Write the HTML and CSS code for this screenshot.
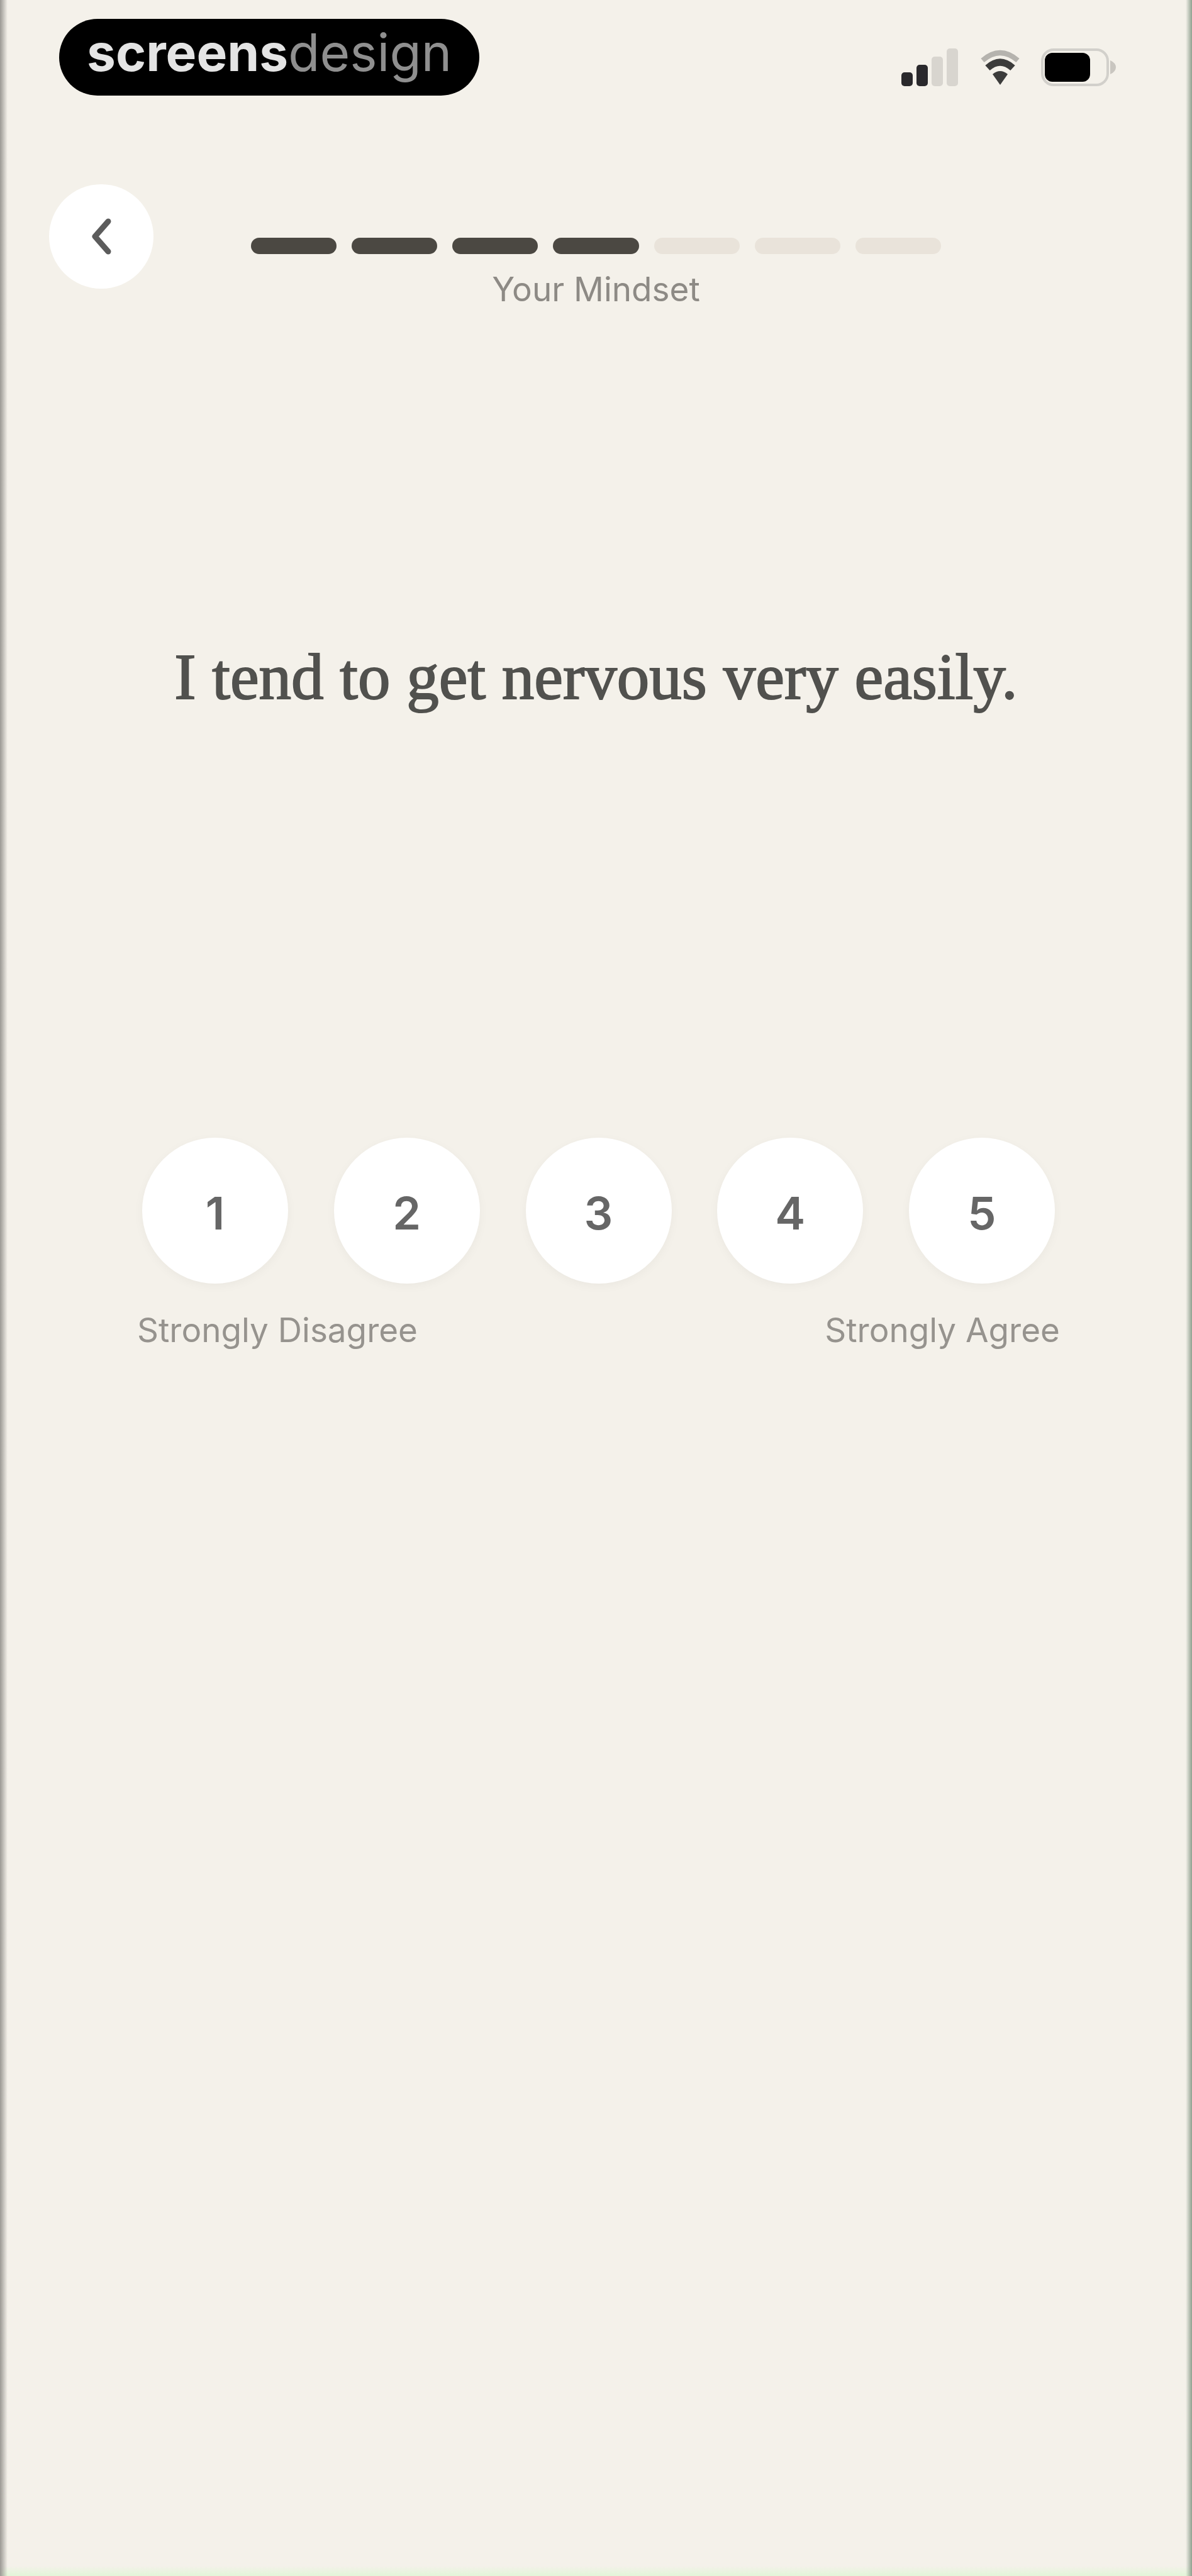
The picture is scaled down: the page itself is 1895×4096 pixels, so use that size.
FILE: index.html
```html
<!DOCTYPE html>
<html lang="en">
	<head>
		<meta charset="utf-8" />
		<title>Your Mindset</title>
		<link rel="stylesheet" href="styles.css">
	</head>
	<body>
		<div class="screen">
			<div class="status">
				<div class="brand"><b>screens</b><span>design</span></div>
				<div class="status_icons">
					<svg class="signal" viewBox="0 0 94 64">
						<rect x="2" y="40" width="18" height="22" rx="5" fill="#2a292c"/>
						<rect x="26" y="28" width="18" height="34" rx="5" fill="#2a292c"/>
						<rect x="50" y="15" width="18" height="47" rx="5" fill="#d8d5cf"/>
						<rect x="74" y="2" width="18" height="60" rx="5" fill="#d8d5cf"/>
					</svg>
					<svg class="wifi" viewBox="0 0 70 64">
						<path d="M7 21Q35-3 63 21" fill="none" stroke="#b5b3ae" stroke-width="8"/>
						<path d="M15 33Q35 15 55 33" fill="none" stroke="#3c3c3b" stroke-width="11"/>
						<path d="M23 43Q35 33 47 43L35 60Z" fill="#3c3c3b"/>
					</svg>
					<svg class="battery" viewBox="0 0 120 64">
						<rect x="2" y="4" width="104" height="56" rx="18" fill="none" stroke="#d2d0cb" stroke-width="4"/>
						<rect x="6" y="9" width="72" height="46" rx="12" fill="#000"/>
						<path d="M110 21Q119 25 119 32T110 43Z" fill="#c9c6c0"/>
					</svg>
				</div>
			</div>

			<div class="top">
				<button class="back" aria-label="Back">
					<svg viewBox="0 0 34 60"><path d="M28 6L7 30L28 54" fill="none" stroke="#5c5c5c" stroke-width="9" stroke-linecap="round" stroke-linejoin="round"/></svg>
				</button>
				<div class="progress_wrap">
					<ul class="progress">
						<li class="done"></li>
						<li class="done"></li>
						<li class="done"></li>
						<li class="done"></li>
						<li></li>
						<li></li>
						<li></li>
					</ul>
					<p class="step">Your Mindset</p>
				</div>
			</div>

			<h1 class="question">I tend to get nervous very easily.</h1>

			<div class="scale">
				<div class="choices">
					<button>1</button>
					<button>2</button>
					<button>3</button>
					<button>4</button>
					<button>5</button>
				</div>
				<div class="ends">
					<span>Strongly Disagree</span>
					<span>Strongly Agree</span>
				</div>
			</div>
		</div>
	</body>
</html>
```
FILE: styles.css
```css
*{
	margin:0;
	padding:0;
	box-sizing: border-box;
	list-style: none;
}
body{
	background: #f4f1ea;
	font-family: Inter, "Liberation Sans", sans-serif;
}
button{
	border: 0;
	background: #fff;
	border-radius: 50%;
	font-family: inherit;
	cursor: pointer;
}
/* thin device edge left, right and bottom */
.screen{
	min-height: 100vh;
	padding-top: 30px;
	background:
		linear-gradient(to right, #9b9994, #f4f1ea00) left / 12px 100% no-repeat,
		linear-gradient(to left, #8fa08f, #f4f1ea00) right / 10px 100% no-repeat,
		linear-gradient(to top, #e2f6d8, #f4f1ea00) bottom / 100% 16px no-repeat,
		#f4f1ea;
}
.status{
	display: flex;
	justify-content: space-between;
	align-items: flex-start;
	padding: 0 120px 0 94px;
}
.brand{
	height: 122px;
	padding: 0 44px;
	border-radius: 61px;
	background: #000;
	color: #8f8f8f;
	font-size: 82px;
	line-height: 108px;
}
	.brand b{color: #e4e4e4;}
	.brand span{font-weight: 400;}
.status_icons{
	display: flex;
	gap: 30px;
	padding-top: 45px;
}
	.status_icons svg{
		display: block;
		height: 64px;
	}
	.signal{width: 94px;}
	.wifi{width: 70px;}
	.battery{width: 120px;}
.top{
	display: grid;
	grid-template-columns: 166px 1fr 166px;
	padding: 0 78px;
	margin-top: 141px;
}
.back{
	width: 166px;
	height: 166px;
}
	.back svg{
		display: block;
		width: 34px;
		height: 60px;
		margin: 0 auto;
	}
.progress_wrap{
	width: 78%;
	margin: 0 auto;
	padding-top: 85px;
}
.progress{
	display: flex;
	gap: 24px;
}
	.progress li{
		flex: 1;
		height: 26px;
		border-radius: 13px;
		background: #e9e3da;
	}
	.progress .done{background: #4b4842;}
.step{
	margin-top: 20px;
	text-align: center;
	font-size: 53px;
	line-height: 72px;
	color: #8d8a85;
}
.question{
	margin-top: 510px;
	padding: 0 80px;
	text-align: center;
	font-family: "Liberation Serif", serif;
	font-weight: 400;
	font-size: 103px;
	line-height: 140px;
	color: #51514e;
	-webkit-text-stroke: 2px #51514e;
}
.scale{
	margin-top: 663px;
	padding: 0 210px 0 218px;
}
.choices{
	display: flex;
	justify-content: space-between;
	padding: 0 8px;
}
	.choices button{
		width: 232px;
		height: 232px;
		padding-top: 6px;
		font-size: 72px;
		font-weight: 600;
		color: #666;
		box-shadow: 0 4px 16px #0000000a;
	}
.ends{
	display: flex;
	justify-content: space-between;
	margin-top: 38px;
	font-size: 53px;
	line-height: 72px;
	color: #96938e;
}
```
